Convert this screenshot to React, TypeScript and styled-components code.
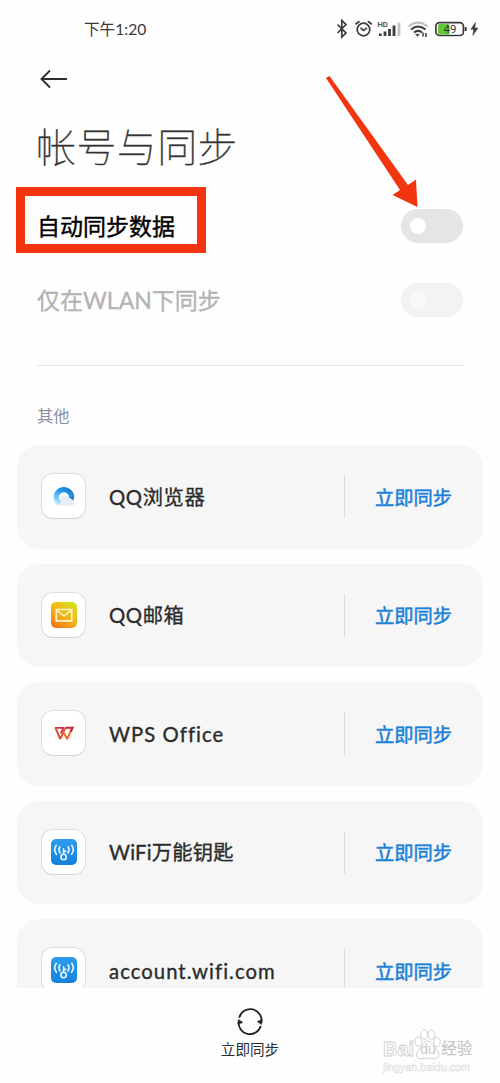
import React from "react";
import styled, { createGlobalStyle } from "styled-components";

const Global = createGlobalStyle`
  * { box-sizing: border-box; }
  body {
    margin: 0;
    background: #fefefe;
    font-family: Lato, "Noto Sans CJK SC", sans-serif;
    color: #2b2b2b;
  }
`;

const Screen = styled.main`
  position: relative;
  width: 500px;
  height: 1083px;
  overflow: hidden;
  display: flex;
  flex-direction: column;
  background: #fefefe;
`;

const StatusBar = styled.header`
  height: 58px;
  padding: 0 20px 0 84px;
  display: flex;
  align-items: center;
  justify-content: space-between;
`;

const Time = styled.span`
  font-size: 15.6px;
  line-height: 20px;
  white-space: nowrap;
  color: #3a3a3a;
`;

const BackRow = styled.div`
  height: 44px;
  padding: 10px 0 0 39px;
`;

const Title = styled.h1`
  margin: 0;
  height: 87px;
  padding: 14px 0 0 36px;
  font-size: 40px;
  line-height: 62px;
  letter-spacing: 0.4px;
  font-weight: 100;
  color: #333;
  -webkit-text-stroke: 0.45px currentColor;
`;

const Setting = styled.div<{ $disabled?: boolean }>`
  height: 74px;
  padding: 0 37px;
  display: flex;
  align-items: center;
  justify-content: space-between;
  font-size: 23px;
  line-height: 34px;
  color: ${(p) => (p.$disabled ? "#b3b3b3" : "#000")};
  -webkit-text-stroke: ${(p) => (p.$disabled ? "0.3px" : "0.4px")} currentColor;
`;

const Toggle = styled.span<{ $disabled?: boolean }>`
  width: 62px;
  height: 34px;
  border-radius: 17px;
  padding: 9px;
  background: ${(p) => (p.$disabled ? "#f3f3f3" : "#e5e5e5")};
  &::before {
    content: "";
    display: block;
    width: 16px;
    height: 16px;
    border-radius: 50%;
    background: ${(p) => (p.$disabled ? "#f9f9f9" : "#fff")};
  }
`;

const Divider = styled.hr`
  width: 426px;
  height: 1px;
  margin: 28px 0 0 37px;
  border: 0;
  background: #e4e4e4;
`;

const SectionLabel = styled.h2`
  margin: 0;
  height: 79px;
  padding: 37px 0 0 37px;
  font-size: 16.3px;
  line-height: 26px;
  font-weight: 400;
  color: #8990a6;
`;

const List = styled.section`
  height: 542.5px;
  overflow: hidden;
  padding: 0 17px;
  display: flex;
  flex-direction: column;
  gap: 15px;
`;

const Card = styled.article`
  flex: none;
  height: 103.5px;
  border-radius: 22px;
  padding-left: 24px;
  display: flex;
  align-items: center;
  background: #f6f6f6;
`;

const AppIcon = styled.span`
  width: 45px;
  height: 46px;
  margin-bottom: 1px;
  border-radius: 12px;
  border: 1px solid #dedede;
  border-bottom-color: #d2d2d2;
  background: #fff;
  display: flex;
  align-items: center;
  justify-content: center;
`;

const Name = styled.span<{ $spacing?: number }>`
  flex: 1;
  padding-left: 23px;
  font-size: 20.3px;
  line-height: 30px;
  white-space: nowrap;
  letter-spacing: ${(p) => p.$spacing ?? 0}px;
  -webkit-text-stroke: 0.35px currentColor;
`;

const SyncAction = styled.button`
  width: 139px;
  height: 43px;
  padding: 0 1px 0 0;
  border: 0;
  border-left: 1px solid #dcdcdc;
  background: none;
  font: inherit;
  font-size: 19.3px;
  color: #1b80d8;
  -webkit-text-stroke: 0.5px currentColor;
`;

const BottomBar = styled.footer`
  flex: 1;
  padding-top: 20px;
  display: flex;
  flex-direction: column;
  align-items: center;
  gap: 3px;
  font-size: 14.6px;
  line-height: 22px;
`;

const HighlightBox = styled.div`
  position: absolute;
  left: 16px;
  top: 187px;
  width: 190px;
  height: 66px;
  border: 9px solid #f2350f;
`;

const Pointer = styled.svg`
  position: absolute;
  left: 320px;
  top: 70px;
`;

const Watermark = styled.div`
  position: absolute;
  left: 383px;
  top: 1027px;
  width: 100px;
  color: #fff;
  font-family: "Liberation Sans", "Noto Sans CJK SC", sans-serif;
`;

const WatermarkBrand = styled.div`
  height: 34px;
  display: flex;
  align-items: flex-end;
  font-size: 20px;
  font-weight: 700;
  line-height: 24px;
  -webkit-text-stroke: 0.8px #cfcfcf;
`;

const PawWrap = styled.span`
  position: relative;
  width: 27px;
  height: 34px;
  span {
    position: absolute;
    left: 6px;
    top: 13px;
    font-size: 14px;
    line-height: 18px;
    font-weight: 400;
    color: #c9c9c9;
    -webkit-text-stroke: 0;
  }
  svg { display: block; }
`;

const WatermarkKanji = styled.span`
  font-size: 15.5px;
  font-weight: 400;
  color: #c6c6c6;
  -webkit-text-stroke: 0.2px #c6c6c6;
`;

const WatermarkUrl = styled.div`
  font-size: 10.8px;
  line-height: 12px;
  -webkit-text-stroke: 0.5px #dcdcdc;
`;

const StatusIcons = () => (
  <svg width="146" height="22" viewBox="334 18 146 22" fill="none" stroke="#3c3c3c">
    <path d="M337.5 24.5L346 33L341.8 37V20.5L346 24.5L337.5 33" strokeWidth="1.7" />
    <circle cx="363.5" cy="29.5" r="6.3" strokeWidth="1.7" />
    <path d="M360.5 27.8L363.5 30.5L367 27.8M355.5 24.3L359.5 21.3M367.8 21.3L371.8 24.3" strokeWidth="1.7" />
    <text x="377.5" y="27" fontSize="7.5" fontFamily="Roboto, sans-serif" fill="#3c3c3c" strokeWidth="0.2">HD</text>
    <path d="M380.3 36V33.5M385 36V31.5M389.5 36V29M394 36V25.5" strokeWidth="2.8" />
    <path d="M399 36V22.5" stroke="#c4c4c4" strokeWidth="2.8" />
    <path d="M408.5 26.5Q418 18.5 427.5 26.5" stroke="#bdbdbd" strokeWidth="2" />
    <path d="M411 29.5Q418 23.5 425.5 29.5M414 32.6Q418 29.2 422 32.6" strokeWidth="2" />
    <path d="M415.5 34.2H419.5L417.5 36.4Z" fill="#3c3c3c" strokeWidth="0.5" />
    <path d="M423 32.5V36.5M426 33V37" strokeWidth="1.5" />
    <rect x="438" y="24" width="11.5" height="10.5" rx="1.5" fill="#65c63b" stroke="none" />
    <rect x="435.9" y="22.7" width="27.5" height="12.8" rx="3.5" strokeWidth="1.7" />
    <path d="M465.7 27V31" strokeWidth="2" />
    <text x="443.5" y="33.2" fontSize="11.5" fontFamily="Roboto, sans-serif" fill="#333" stroke="none">49</text>
    <path d="M475.5 22.5L470.8 29.3H473.8L472.8 35.5L478 28H474.8Z" fill="#3c3c3c" strokeWidth="0.5" />
  </svg>
);

const BrowserIcon = () => (
  <svg width="26" height="26" viewBox="0 0 26 26" fill="none">
    <defs>
      <linearGradient id="ring" gradientUnits="userSpaceOnUse" x1="4" y1="23" x2="15" y2="4">
        <stop offset="0" stopColor="#eef8fe" />
        <stop offset="0.4" stopColor="#6cc5f3" />
        <stop offset="0.75" stopColor="#2196e4" />
        <stop offset="1" stopColor="#1a7fd6" />
      </linearGradient>
      <linearGradient id="cloud" x1="0" y1="0" x2="1" y2="0">
        <stop offset="0" stopColor="#e2f3fd" />
        <stop offset="1" stopColor="#e6e9f0" />
      </linearGradient>
    </defs>
    <path d="M4 22Q7 18 9 17Q10 12.5 14 12.5Q18 13 19 16.5Q23.5 17 23 21Q22.5 22.5 20 22.5H6Z" fill="url(#cloud)" />
    <path d="M8.5 20.6A7.7 7.7 0 1 1 20.6 14.6" stroke="url(#ring)" strokeWidth="5.2" />
    <path d="M18 14.2L22.3 17.6L23.2 13.4Z" fill="#1e70cc" />
  </svg>
);

const MailIcon = () => (
  <svg width="26" height="26" viewBox="0 0 26 26" fill="none">
    <defs>
      <linearGradient id="mail" x1="0.15" y1="1" x2="0.85" y2="0">
        <stop offset="0" stopColor="#f2741b" />
        <stop offset="0.5" stopColor="#f6b414" />
        <stop offset="1" stopColor="#d3e31a" />
      </linearGradient>
    </defs>
    <rect width="26" height="26" rx="5" fill="url(#mail)" />
    <path d="M5.3 7.5H20.7V18.8H5.3Z" stroke="#fff6d0" strokeWidth="1.7" />
    <path d="M5.5 8L13 14L20.5 8" stroke="#fff6d0" strokeWidth="1.6" />
  </svg>
);

const WpsIcon = () => (
  <svg width="26" height="26" viewBox="0 0 26 26" fill="none">
    <path d="M4 7.8H12.4L9.8 13.4" stroke="#cf3040" strokeWidth="1.7" />
    <path d="M4.6 8L9.2 19L13.6 9.4Q14.4 7.8 16.4 7.8" stroke="#e5502f" strokeWidth="2" strokeLinejoin="bevel" />
    <path d="M12.6 12.6L16.2 19L20.8 8.6" stroke="#ee6a2c" strokeWidth="2" strokeLinejoin="bevel" />
    <path d="M15 7.8H21.6L19.8 11.8" stroke="#c3283c" strokeWidth="2" />
  </svg>
);

const WifiKeyIcon = () => (
  <svg width="26" height="26" viewBox="0 0 26 26" fill="none" stroke="#eaf8ff" strokeWidth="1.6" strokeLinecap="round">
    <defs>
      <linearGradient id="key" x1="0" y1="0" x2="0" y2="1">
        <stop offset="0" stopColor="#2e9cec" />
        <stop offset="1" stopColor="#1481dd" />
      </linearGradient>
    </defs>
    <rect width="26" height="26" rx="5" fill="url(#key)" stroke="none" />
    <circle cx="12.6" cy="18" r="2.7" />
    <path d="M12.6 15V9.8M13 12.4H14.8" />
    <path d="M8.9 7.8Q7 10.8 9.1 14M5.3 6.3Q2 10.8 5.5 15.3M17.1 7.8Q19 10.8 16.9 14M20.7 6.3Q24 10.8 20.5 15.3" />
  </svg>
);

const accounts = [
  { name: "QQ浏览器", Icon: BrowserIcon, spacing: 0.6 },
  { name: "QQ邮箱", Icon: MailIcon, spacing: 0.6 },
  { name: "WPS Office", Icon: WpsIcon, spacing: 1.05 },
  { name: "WiFi万能钥匙", Icon: WifiKeyIcon, spacing: 0.2 },
  { name: "account.wifi.com", Icon: WifiKeyIcon, spacing: 1.05 },
];

export default function App() {
  return (
    <Screen>
      <Global />
      <StatusBar>
        <Time>下午1:20</Time>
        <StatusIcons />
      </StatusBar>
      <BackRow>
        <svg width="29" height="22" viewBox="0 0 29 22" fill="none" stroke="#2e2e2e" strokeWidth="1.9">
          <path d="M28 11H2.5M11 2.5L2.5 11L11 19.5" />
        </svg>
      </BackRow>
      <Title>帐号与同步</Title>
      <Setting>
        自动同步数据
        <Toggle />
      </Setting>
      <Setting $disabled>
        仅在WLAN下同步
        <Toggle $disabled />
      </Setting>
      <Divider />
      <SectionLabel>其他</SectionLabel>
      <List>
        {accounts.map(({ name, Icon, spacing }) => (
          <Card key={name}>
            <AppIcon>
              <Icon />
            </AppIcon>
            <Name $spacing={spacing}>{name}</Name>
            <SyncAction>立即同步</SyncAction>
          </Card>
        ))}
      </List>
      <BottomBar>
        <svg width="28" height="28" viewBox="0 0 28 28" fill="none" stroke="#222" strokeWidth="1.8">
          <path d="M3.2 9.8A11.3 11.3 0 0 1 25.2 15M24.8 18A11.3 11.3 0 0 1 2.8 13" />
          <path d="M21.2 13.5L25.4 16.5L26.2 11.8ZM6.8 14.5L2.6 11.5L1.8 16.2Z" fill="#222" strokeWidth="0.6" />
        </svg>
        立即同步
      </BottomBar>
      <HighlightBox />
      <Pointer width="110" height="145" viewBox="320 70 110 145">
        <path d="M326 78L329.5 76L408 185L416 179.5L417.5 207L392.5 195L400 190Z" fill="#f2350f" />
      </Pointer>
      <Watermark>
        <WatermarkBrand>
          Bai
          <PawWrap>
            <svg width="27" height="34" viewBox="0 0 27 34" fill="#fff" stroke="#cfcfcf">
              <ellipse cx="4.5" cy="14.5" rx="3.4" ry="4.6" />
              <ellipse cx="10" cy="7.5" rx="3.4" ry="4.8" />
              <ellipse cx="17.5" cy="7.7" rx="3.4" ry="4.8" />
              <ellipse cx="23" cy="15" rx="3.2" ry="4.5" />
              <path d="M13.5 14C17 14 18.5 18.5 22 22C28 29 23 33 18 31.5Q13.5 30.5 9 31.5C3 33 0 28 5 22C8.5 18.5 10 14 13.5 14Z" />
            </svg>
            <span>du</span>
          </PawWrap>
          <WatermarkKanji>经验</WatermarkKanji>
        </WatermarkBrand>
        <WatermarkUrl>jingyan.baidu.com</WatermarkUrl>
      </Watermark>
    </Screen>
  );
}
